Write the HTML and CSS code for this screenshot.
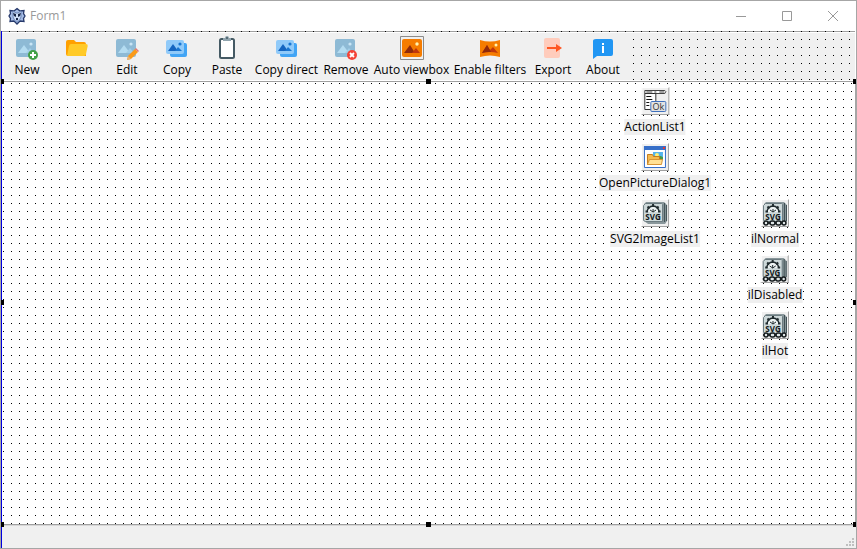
FILE: index.html
```html
<!DOCTYPE html>
<html lang="en">
<head>
<meta charset="utf-8">
<title>Form1</title>
<link rel="stylesheet" href="styles.css">
</head>
<body>
<svg class="defs" aria-hidden="true">
  <defs>
    <g id="picture">
      <rect x="1" y="3" width="20" height="18" rx="2" fill="#8ebad5"/>
      <circle cx="16" cy="8" r="1.6" fill="#c9e5f5"/>
      <path d="M3 17 9 9l6 8z" fill="#b4dcf1"/>
      <path d="m11 17 4-5 4 5z" fill="#a2cfe8"/>
    </g>
    <g id="copies">
      <rect x="5" y="7" width="17" height="14" rx="2" fill="#42a5f5"/>
      <rect x="1" y="4" width="18" height="14" rx="2" fill="#90caf9"/>
      <circle cx="15" cy="8" r="1.600" fill="#1976d2"/>
      <path d="m3 15 5-7 5 7z" fill="#1565c0"/>
      <path d="m10 15 3-4 4 4z" fill="#1976d2"/>
    </g>
    <g id="svg-stack">
      <path d="M4 2h18l3 3v16l-2 3H6l-4-3V4z" fill="#89979b"/>
      <path d="M22.500 3v19M24.500 5v16" stroke="#405055"/>
      <path d="M3.500 3.500h16l1 1v17h-17l-2-1v-15z" fill="#ced9da" stroke="#6b7b80"/>
      <path d="M5 12a6 6 0 0 1 12 0" fill="#edf3f3" stroke="#202b2e" stroke-width="1.500"/>
      <path d="M11 12V9M11 12 8 10M11 12l3-2" stroke="#202b2e"/>
      <path d="M11 7V4M7.500 8.500l-2-2M14.500 8.500l2-2M6 11.500H3.500M16 11.500h2.500" stroke="#202b2e" stroke-width="2"/>
      <text x="11" y="20" text-anchor="middle" class="svg-word">SVG</text>
    </g>
    <g id="chain" fill="#dfe6e7" stroke="#151b1d" stroke-width="1.500">
      <path d="M1 23h23"/>
      <rect x="2" y="21" width="4" height="4" rx="2"/>
      <rect x="8" y="21" width="5" height="4" rx="2"/>
      <rect x="14" y="21" width="5" height="4" rx="2"/>
      <rect x="20" y="21" width="4" height="4" rx="2"/>
    </g>
  </defs>
</svg>
<div class="window">
  <header class="titlebar">
    <svg class="logo" viewBox="0 0 18 18" aria-hidden="true">
      <path d="M9 1.500 12 4l4-.5-.5 3L17 9l-1.500 2.500.5 3-4-.5-3 3-3-3-4 .5.500-3L1 9l1.500-2.500L2 3.500 6 4z" fill="#a6bde6" stroke="#26396b" stroke-width="1.300"/>
      <path d="m5 4 3 2h2l3-2v6l-2 4H7l-2-4z" fill="#cfdff8" stroke="#6b85b8"/>
      <path d="m5 6 3 1v3L6 9zm8 0-3 1v3l2-1zM8 11h2v2H8z" fill="#172546"/>
    </svg>
    <h1>Form1</h1>
    <div class="controls">
      <button aria-label="Minimize"><svg viewBox="0 0 10 10"><path d="M0 5.500h10"/></svg></button>
      <button aria-label="Maximize"><svg viewBox="0 0 10 10"><path d="M.5.500h9v9h-9z"/></svg></button>
      <button aria-label="Close"><svg viewBox="0 0 10 10"><path d="m0 0 10 10M10 0 0 10"/></svg></button>
    </div>
  </header>
  <div class="form">
    <nav class="toolbar" aria-label="Main toolbar">
      <div class="tools">
        <button><svg viewBox="0 0 24 24"><use href="#picture"/><circle cx="18" cy="19" r="5" fill="#43a047"/><path d="M18 16v6M15 19h6" stroke="#fff" stroke-width="2"/></svg>New</button>
        <button><svg viewBox="0 0 24 24"><path d="M1 6q0-2 2-2h6l2 2h8q2 0 2 2v12H3q-2 0-2-2z" fill="#ffa000"/><path d="M6 8h15q2 0 1.700 2l-1.700 8q-.5 2-2 2H2L4 10q.5-2 2-2z" fill="#ffca28"/></svg>Open</button>
        <button><svg viewBox="0 0 24 24"><use href="#picture"/><path d="m13 20 7-7 3 3-7 7-4 1z" fill="#fb9a18"/><path d="m20 13 1-1 3 3-1 1z" fill="#e57373"/><path d="m13 20 3 3-4 1z" fill="#e5b47a"/></svg>Edit</button>
        <button><svg viewBox="0 0 24 24"><use href="#copies"/></svg>Copy</button>
        <button><svg viewBox="0 0 24 24"><rect x="5" y="3" width="14" height="19" rx="1.500" fill="#fff" stroke="#455a64" stroke-width="2"/><path d="M8 2h2a2 2 0 0 1 4 0h2v3H8z" fill="#90a4ae"/><circle cx="12" cy="2" r="1" fill="#455a64"/></svg>Paste</button>
        <button><svg viewBox="0 0 24 24"><use href="#copies"/></svg>Copy direct</button>
        <button><svg viewBox="0 0 24 24"><use href="#picture"/><circle cx="18" cy="19" r="5" fill="#f44336"/><path d="m16 17 4 4m0-4-4 4" stroke="#fff" stroke-width="1.800"/></svg>Remove</button>
        <button aria-pressed="true"><svg viewBox="0 0 24 24"><path d="M.5.500h23v23H.5z" stroke="#8b8b8b" fill="#f0f0f0"/><rect x="2" y="3" width="20" height="18" rx="2" fill="#f57c00"/><circle cx="17" cy="8" r="1.700" fill="#fff3b0"/><path d="m4 17 6-8 5 8z" fill="#8f2a0b"/><path d="m12 17 4-5 4 5z" fill="#bf360c"/></svg>Auto viewbox</button>
        <button><svg viewBox="0 0 24 24"><path d="M2 4q10 3 20 0v17q-10-3-20 0z" fill="#f57c00"/><circle cx="18" cy="9" r="1.500" fill="#fff3b0"/><path d="M4 17 9 9l3 5 3-3 5 6q-8-2-16 0z" fill="#bf360c"/><path d="m4 17 5-8 4 7q-5-.5-9 1z" fill="#8f2a0b"/></svg>Enable filters</button>
        <button><svg viewBox="0 0 24 24"><rect x="3" y="2" width="16" height="20" rx="2" fill="#ffccbc"/><path d="M6 12h10" stroke="#ff5722" stroke-width="2"/><path d="m15 8 6 4-6 4z" fill="#ff5722"/></svg>Export</button>
        <button><svg viewBox="0 0 24 24"><path d="M5 3h15q2 0 2 2v13q0 2-2 2H6l-4 3V5q0-2 3-2z" fill="#2196f3"/><path d="M11 7h2v2h-2zM11 10h2v7h-2z" fill="#fff"/></svg>About</button>
      </div>
    </nav>
    <main class="canvas">
      <figure class="component action-list">
        <svg viewBox="0 0 26 26"><path d="M2.500 2.500h20l1 1-1 2h-20z" fill="#fff" stroke="#444"/><path d="M4 4h6M12 4h2M17 4h5" stroke="#444"/><path d="M2.500 5.500h11v16h-11z" fill="#fff" stroke="#333"/><path d="M4 8.500h5M4 11.500h6M4 14.500h3M4 17.500h3" stroke="#111"/><rect x="8.500" y="13.500" width="15" height="10" rx="1" fill="#e2e2e2" stroke="#3f70bd"/><text x="16" y="22" text-anchor="middle" class="ok-word">Ok</text></svg>
        <figcaption>ActionList1</figcaption>
      </figure>
      <figure class="component picture-dialog">
        <svg viewBox="0 0 26 26"><path d="M2.500 2.500h21v21h-21z" fill="#fff" stroke="#376fc8"/><path d="M2 2h22v4H2z" fill="#376fc8"/><path d="M21 3h2v2h-2z" fill="#e53935"/><path d="M11 8h10v7H11z" fill="#54b4ed"/><path d="M11 14q4-4 10-1v3H11z" fill="#489945"/><circle cx="15" cy="11" r="2" fill="#fff176"/><path d="M5.500 20.500v-10h5l1 2h6v8z" fill="#f4ba50" stroke="#c57c1d"/><path d="m5.500 20.500 2-5h13l-1 5z" fill="#ffe095" stroke="#d69435"/></svg>
        <figcaption>OpenPictureDialog1</figcaption>
      </figure>
      <figure class="component svg-list">
        <svg viewBox="0 0 26 26"><use href="#svg-stack"/></svg>
        <figcaption>SVG2ImageList1</figcaption>
      </figure>
      <figure class="component normal-list">
        <svg viewBox="0 0 26 26"><use href="#svg-stack"/><use href="#chain"/></svg>
        <figcaption>ilNormal</figcaption>
      </figure>
      <figure class="component disabled-list">
        <svg viewBox="0 0 26 26"><use href="#svg-stack"/><use href="#chain"/></svg>
        <figcaption>ilDisabled</figcaption>
      </figure>
      <figure class="component hot-list">
        <svg viewBox="0 0 26 26"><use href="#svg-stack"/><use href="#chain"/></svg>
        <figcaption>ilHot</figcaption>
      </figure>
      <i class="handle top left"></i><i class="handle top center"></i><i class="handle top right"></i>
      <i class="handle middle left"></i><i class="handle middle right"></i>
      <i class="handle bottom left"></i><i class="handle bottom center"></i><i class="handle bottom right"></i>
    </main>
    <footer class="statusbar">
      <svg viewBox="0 0 8 8" aria-hidden="true"><path d="M6 0h2v2H6zM3 3h2v2H3zM6 3h2v2H6zM0 6h2v2H0zM3 6h2v2H3zM6 6h2v2H6z" fill="#bfbfbf"/></svg>
    </footer>
  </div>
</div>
</body>
</html>
```
FILE: styles.css
```css
* { box-sizing: border-box; }
body {
  margin: 0;
  font: 12px/16px "Open Sans", "Noto Sans", sans-serif;
  color: #000;
}
button {
  padding: 0;
  border: 0;
  background: transparent;
  color: inherit;
  font: inherit;
}
.defs { position: absolute; width: 0; height: 0; }
.window {
  display: flex;
  flex-direction: column;
  min-height: 100vh;
  border: 1px solid #a6a6a6;
  background: #fff;
}
.titlebar {
  display: flex;
  align-items: center;
  height: 30px;
  padding-left: 7px;
}
.logo { width: 18px; height: 18px; }
h1 {
  margin: 0 0 0 4px;
  color: #999;
  font-size: 12px;
  font-weight: 400;
}
.controls { display: flex; margin-left: auto; }
.controls button {
  display: grid;
  place-items: center;
  width: 46px;
  height: 30px;
}
.controls svg {
  width: 10px;
  height: 10px;
  fill: none;
  stroke: #999;
}
.form {
  display: flex;
  flex: 1;
  flex-direction: column;
  border-left: 1px solid #0000e0;
}
.toolbar {
  height: 50px;
  border-right: 1px solid #fff;
  background:
    conic-gradient(from 270deg at 1px 1px, #000 90deg, transparent 0) 7px 0 / 8px 8px,
    linear-gradient(#a0a0a0 1px, #fff 1px 2px, #f0f0f0 2px 49px, #fff 49px);
}
.tools {
  display: grid;
  grid-template-columns: repeat(5, 50px) 69px 50px 81px 76px 50px 50px;
  width: max-content;
  height: 47px;
  margin-top: 2px;
  background: #f0f0f0;
}
.tools button {
  display: flex;
  flex-direction: column;
  align-items: center;
  padding-top: 3px;
  gap: 2px;
  white-space: nowrap;
}
.tools svg { width: 24px; height: 24px; overflow: visible; }
.canvas {
  position: relative;
  flex: 1;
  border-top: 1px solid #a0a0a0;
  border-right: 1px solid #a6a6a6;
  background: conic-gradient(from 270deg at 1px 1px, #000 90deg, transparent 0) 1px 1px / 8px 8px;
}
.component {
  position: absolute;
  display: flex;
  flex-direction: column;
  align-items: center;
  gap: 4px;
  margin: 0;
  transform: translateX(-50%);
}
.component > svg {
  width: 28px;
  height: 28px;
  border: 1px solid #fff;
  border-right-color: #a0a0a0;
  border-bottom-color: #a0a0a0;
  background: #f0f0f0;
}
figcaption { background: #f0f0f0; white-space: nowrap; }
.svg-word { font: 700 8px "Open Sans", sans-serif; fill: #101719; }
.ok-word { font: 9px "Open Sans", sans-serif; fill: #333; }
.action-list { top: 5px; left: 653px; }
.picture-dialog { top: 61px; left: 653px; }
.svg-list { top: 117px; left: 653px; }
.normal-list { top: 117px; left: 773px; }
.disabled-list { top: 173px; left: 773px; }
.hot-list { top: 229px; left: 773px; }
.handle { position: absolute; width: 5px; height: 5px; background: #000; }
.handle.top { top: -3px; }
.handle.middle { top: calc(50% - 3px); }
.handle.bottom { bottom: -3px; }
.handle.left { left: -1px; width: 3px; }
.handle.center { left: calc(50% - 3px); }
.handle.right { right: -1px; width: 3px; }
.statusbar {
  display: flex;
  align-items: flex-end;
  justify-content: flex-end;
  height: 24px;
  padding: 2px;
  border-top: 1px solid #a0a0a0;
  box-shadow: inset 0 1px #d7d7d7;
  background: #f0f0f0;
}
.statusbar svg { width: 8px; height: 8px; }
```
